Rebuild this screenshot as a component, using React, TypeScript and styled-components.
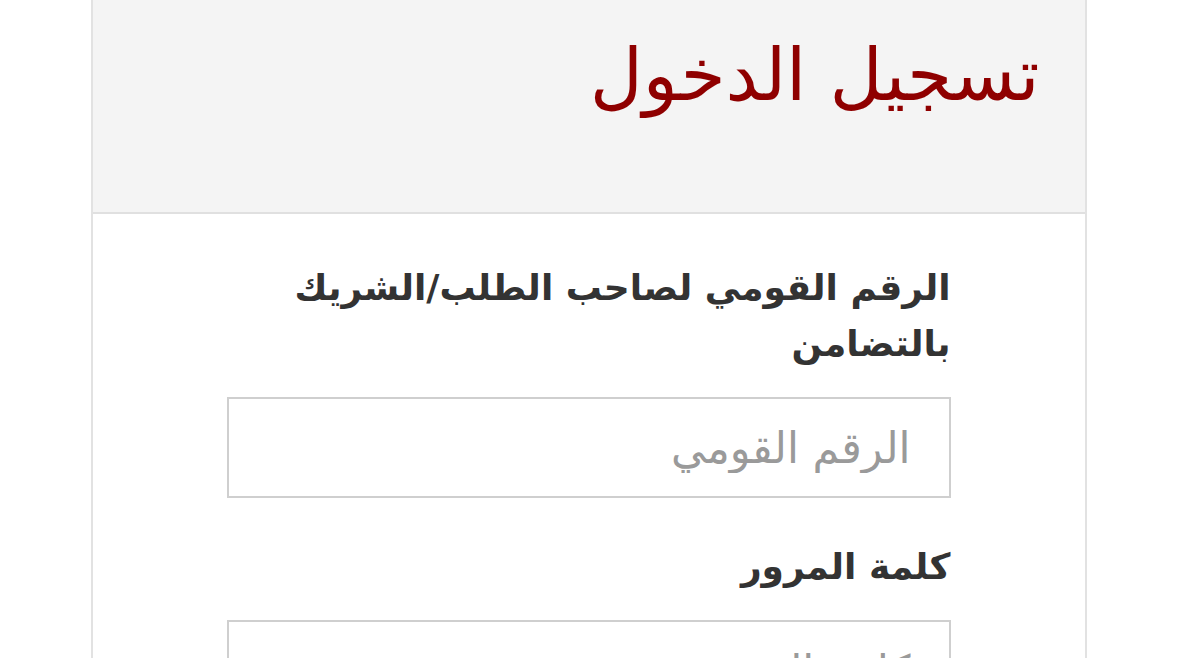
import React from "react";
import styled, { createGlobalStyle } from "styled-components";

const Global = createGlobalStyle`
  html, body { margin: 0; padding: 0; background: #ffffff; }
  body { font-family: "DejaVu Sans", "Noto Sans", sans-serif; }
  * { box-sizing: border-box; }
`;

const Page = styled.div`
  direction: rtl;
  display: flex;
  justify-content: center;
  height: 658px;
  overflow: hidden;
`;

const Card = styled.div`
  width: 996px;
  border-left: 2px solid #e2e2e2;
  border-right: 2px solid #e2e2e2;
  display: flex;
  flex-direction: column;
`;

const Header = styled.div`
  flex-shrink: 0;
  background: #f4f4f4;
  height: 214px;
  border-bottom: 2px solid #e0e0e0;
  padding: 20px 45px 0 0;
`;

const Title = styled.h1`
  margin: 0;
  font-weight: 400;
  font-size: 73px;
  line-height: 110px;
  color: #8f0000;
`;

const Body = styled.div`
  flex-shrink: 0;
  padding: 46px 134px 0;
  display: flex;
  flex-direction: column;
`;

const Field = styled.div`
  display: flex;
  flex-direction: column;
  margin-bottom: 41px;
`;

const Label = styled.label`
  font-weight: 700;
  font-size: 36px;
  line-height: 56px;
  color: #333333;
  margin-bottom: 25px;
`;

const Input = styled.input`
  width: 100%;
  height: 101px;
  border: 2px solid #cfcfcf;
  padding: 0 38px;
  font-family: inherit;
  font-size: 43px;
  color: #333;
  direction: rtl;
  outline: none;
  &::placeholder { color: #9a9a9a; }
`;

export default function App() {
  return (
    <>
      <Global />
      <Page>
        <Card>
          <Header>
            <Title>تسجيل الدخول</Title>
          </Header>
          <Body>
            <Field>
              <Label>الرقم القومي لصاحب الطلب/الشريك بالتضامن</Label>
              <Input placeholder="الرقم القومي" />
            </Field>
            <Field>
              <Label>كلمة المرور</Label>
              <Input type="password" placeholder="كلمة المرور" />
            </Field>
          </Body>
        </Card>
      </Page>
    </>
  );
}
